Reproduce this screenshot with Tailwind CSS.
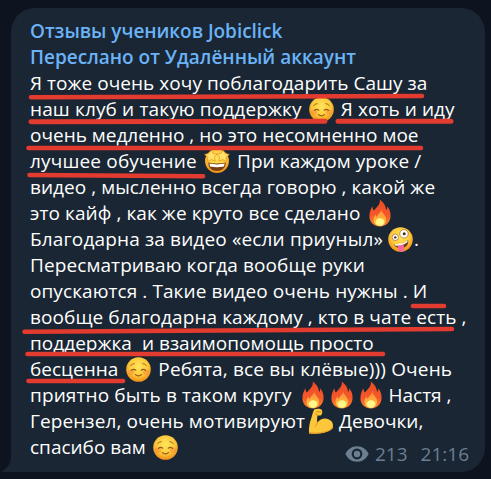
<!DOCTYPE html>
<html lang="ru">
<head>
    <meta charset="UTF-8">
    <title>Отзывы учеников Jobiclick</title>
    <script src="https://cdn.jsdelivr.net/npm/@tailwindcss/browser@4"></script>
</head>
<body class="h-[479px] overflow-hidden bg-[#0d1420] font-['Open_Sans',sans-serif]">
    <!-- Shared emoji -->
    <svg class="absolute size-0">
        <defs>
            <radialGradient id="face" cx="50%" cy="38%" r="62%">
                <stop offset="0" stop-color="#ffe65a" />
                <stop offset=".6" stop-color="#fdc93c" />
                <stop offset="1" stop-color="#ee8d16" />
            </radialGradient>
            <linearGradient id="flame" x1="0" y1="0" x2="0" y2="1">
                <stop offset="0" stop-color="#ee4a23" />
                <stop offset=".6" stop-color="#f4582a" />
                <stop offset="1" stop-color="#fb8a2b" />
            </linearGradient>
            <linearGradient id="core" x1="0" y1="0" x2="0" y2="1">
                <stop offset="0" stop-color="#ff8838" />
                <stop offset=".6" stop-color="#ffb03c" />
                <stop offset="1" stop-color="#ffe46a" />
            </linearGradient>
            <symbol id="smile" viewBox="0 0 25 25">
                <circle cx="12.5" cy="12.5" r="12.3" fill="url(#face)" />
                <ellipse cx="4.8" cy="15.2" rx="3.4" ry="2.6" fill="#f88a3c" opacity=".5" />
                <ellipse cx="20.2" cy="15.2" rx="3.4" ry="2.6" fill="#f88a3c" opacity=".5" />
                <g fill="none" stroke="#9a5a16" stroke-linecap="round">
                    <path d="M5.4 13.4q2-2 4.4-.2M15.2 13.2q2.4-1.8 4.4.2" stroke-width="1.2" />
                    <path d="M9.4 17.6q3.1 2.4 6.2 0" stroke-width="1.2" />
                    <path d="M4.6 8.6q1.4-1.8 3.6-2M16.8 6.6q2.2.2 3.6 2" stroke-width=".9" />
                </g>
            </symbol>
            <symbol id="fire" viewBox="0 0 22 28">
                <path d="M10.8.4C15 3.4 17 7.2 17 11c1-.8 1.4-2 1.3-3.8C20.7 10 21.7 13.5 21.6 17c-.2 6-4.6 10.4-10.6 10.4S.5 23.5.4 17.5C.3 13 2.2 9.8 3.3 7.3c.5 1.7.6 3.2 1.5 4.3C7.3 8.4 11.6 5.600 10.8.4z" fill="url(#flame)" />
                <path d="M12.200 10c.2 3.400 3.600 5.400 4.600 8.600 1 4.400-1.600 8.200-5.800 8.200-4.400 0-7-3.200-6.400-7.200.3-1.800 1.100-3.200 1.900-4.200.2 1.300.7 2 1.400 2.500C8.500 15 12.200 13.500 12.200 10z" fill="url(#core)" />
                <ellipse cx="11" cy="23" rx="4" ry="3.7" fill="#fff68c" />
            </symbol>
        </defs>
    </svg>

    <div class="relative h-[479px] w-[491px]">
        <!-- Message bubble -->
        <div class="relative ml-[11px] w-[474px] pt-2">
            <div class="h-[464px] rounded-[24px] rounded-bl-none bg-[#1a2633] pt-[10px] pl-[19px] text-[19px] leading-[26px] text-white *:h-[26px] *:whitespace-pre">
                <div class="font-semibold tracking-[-.05px] text-[#6ab3f7]">Отзывы учеников Jobiclick</div>
                <div class="font-semibold text-[#6ab3f7]">Переслано от Удалённый аккаунт</div>
                <div class="tracking-[.05px]">Я тоже очень хочу поблагодарить Сашу за</div>
                <div class="flex items-center"><span class="tracking-[.14px]">наш клуб и такую поддержку </span><svg class="ml-[2px] size-[25px]"><use href="#smile" /></svg><span class="ml-[2px] tracking-[.08px]"> Я хоть и иду</span></div>
                <div>очень медленно , но это несомненно мое</div>
                <div class="flex items-center"><span class="tracking-[.17px]">лучшее обучение </span><svg class="ml-[2px] size-[26px]" viewBox="0 0 26 26">
                        <circle cx="13" cy="13" r="12" fill="url(#face)" />
                        <path d="M4.3 14.5q8.7 2 17.4 0c.3 5-3.7 8.5-8.7 8.5s-9-3.5-8.7-8.5z" fill="#7a3f10" />
                        <path d="M5.3 15.6q7.7 1.600 15.4 0l-.8 2.800q-6.900 1.500-13.800 0z" fill="#fff" />
                        <path d="M7.200 2.200l1.900 3.400 4 .5-2.700 3 .8 4.100-4-1.700-3.700 2 .4-4.300L.6 6.400l4.200-.8zM18.800 2.200l-1.900 3.400-4 .5 2.700 3-.8 4.100 4-1.700 3.700 2-.4-4.300 3.300-2.800-4.200-.8z" fill="#ffe26a" stroke="#e78d1b" stroke-width=".7" />
                    </svg><span class="ml-[2px] tracking-[.07px]"> При каждом уроке /</span></div>
                <div class="tracking-[.05px]">видео , мысленно всегда говорю , какой же</div>
                <div class="flex items-center"><span class="tracking-[.08px]">это кайф , как же круто все сделано </span><svg class="ml-1 h-7 w-[22px]"><use href="#fire" /></svg></div>
                <div class="flex items-center"><span class="tracking-[.15px]">Благодарна за видео «если приуныл» </span><svg class="size-[25px]" viewBox="0 0 25 25">
                        <circle cx="12.5" cy="12.5" r="12.3" fill="url(#face)" />
                        <circle cx="7.3" cy="10.3" r="3.2" fill="#fff" stroke="#a8651a" stroke-width=".7" />
                        <circle cx="16" cy="6.8" r="4.2" fill="#fff" stroke="#a8651a" stroke-width=".7" />
                        <circle cx="7.3" cy="10.4" r="1.2" fill="#44301c" />
                        <circle cx="16.2" cy="6.8" r="1.5" fill="#44301c" />
                        <path d="M5.7 17.2q8 1.2 14.3-4.2c1.2 4-2 7.8-6 8.2-3.8.4-6.8-1.2-8.3-4z" fill="#7a3f10" />
                        <path d="M6.3 17q7.8.9 13.4-3.7l-.3 2q-5.4 4-11.8 3.5z" fill="#fff" />
                        <path d="M9.8 18.9l5.8-1.4.5 4.2c.3 4-5.300 4.400-5.800.8z" fill="#f767a2" />
                    </svg><span class="ml-px">.</span></div>
                <div class="tracking-[.1px]">Пересматриваю когда вообще руки</div>
                <div class="tracking-[.08px]">опускаются . Такие видео очень нужны . И</div>
                <div class="tracking-[.08px]">вообще благодарна каждому , кто в чате есть ,</div>
                <div class="tracking-[.03px]">поддержка  и взаимопомощь просто</div>
                <div class="flex items-center"><span>бесценна </span><svg class="ml-[3px] size-[25px]"><use href="#smile" /></svg><span class="ml-[2px] tracking-[.17px]"> Ребята, все вы клёвые))) Очень</span></div>
                <div class="flex items-center"><span class="tracking-[.12px]">приятно быть в таком кругу </span><svg class="ml-[5px] h-7 w-[22px]"><use href="#fire" /></svg><svg class="ml-[7px] h-7 w-[22px]"><use href="#fire" /></svg><svg class="ml-[7px] h-7 w-[22px]"><use href="#fire" /></svg><span class="-ml-[3px]">  Настя ,</span></div>
                <div class="flex items-center"><span class="tracking-[.1px]">Герензел, очень мотивируют</span><svg class="ml-[3px] size-[26px]" viewBox="0 0 26 26">
                        <path d="M6.5 1.300C9 .3 12.2.5 13.5 1.5c1.2 1.2 1 4.2-.2 5.4-1 1-3 .8-3.8.3-.4 2.600-.6 5-.1 7.300 2.400-2.700 5.500-4.400 9-3.800 4.400.7 6.900 3.700 6.600 7.400-.4 4-4.200 5.400-8.500 6.500-5 1.200-10.500 1.400-15.500.8C.6 20 1.600 14.500 3.500 9.500 4.400 6.800 4.800 3.500 6.500 1.300z" fill="#fdc73b" />
                        <path d="M8.6 3.7l4.2.2M9.4 7.2L7.8 5.8M9.4 14.5c-.3 1.7-1.2 3-2.4 3.600" fill="none" stroke="#d98b17" stroke-width="1" stroke-linecap="round" />
                        <path d="M1.2 24.400c5 1 11 .8 15.500-.5 4-1.100 7.300-2.300 8.100-5" fill="none" stroke="#eea428" stroke-width="1.3" />
                    </svg><span> Девочки,</span></div>
                <div class="flex items-center"><span>спасибо вам </span><svg class="ml-[2px] size-[25px]"><use href="#smile" /></svg></div>
            </div>
            <!-- Tail -->
            <svg class="absolute bottom-0 -left-[9px] h-6 w-[9px]" viewBox="0 0 9 24">
                <path d="M9 0v24H1q-1.500-.6 0-1.500Q9 18 9 8z" fill="#1a2633" />
            </svg>
            <!-- Views and time -->
            <div class="absolute right-4 bottom-[5px] flex items-center text-[19px] leading-[26px] text-[#6c7f92]">
                <svg class="mr-[6px] h-4 w-6" viewBox="0 0 24 16">
                    <path d="M12 .3C6.5.3 2.5 3.5.4 8c2.100 4.500 6.100 7.700 11.600 7.700S21.500 12.500 23.600 8C21.500 3.500 17.500.3 12 .3z" fill="#6c7f92" />
                    <circle cx="12" cy="8" r="5.4" fill="#1a2633" />
                    <circle cx="12" cy="8" r="3.2" fill="#6c7f92" />
                </svg>
                <span class="mr-[13px]">213</span>
                <span>21:16</span>
            </div>
        </div>

        <!-- Red marker strokes -->
        <svg class="absolute inset-0 size-full" viewBox="0 0 491 479" fill="none" stroke="#e33b30" stroke-width="4.6" stroke-linecap="round">
            <path d="M31 97.2L422 96" />
            <path d="M31 121.7L325 121.2M338 121.2H451" stroke-width="5" />
            <path d="M28.5 148H421" />
            <path d="M29.5 175L203 176.2" />
            <path d="M413 306H444" />
            <path d="M24.5 331.8L452 329" />
            <path d="M27.5 354H383" />
            <path d="M28.5 381H123" />
        </svg>
    </div>
</body>
</html>
